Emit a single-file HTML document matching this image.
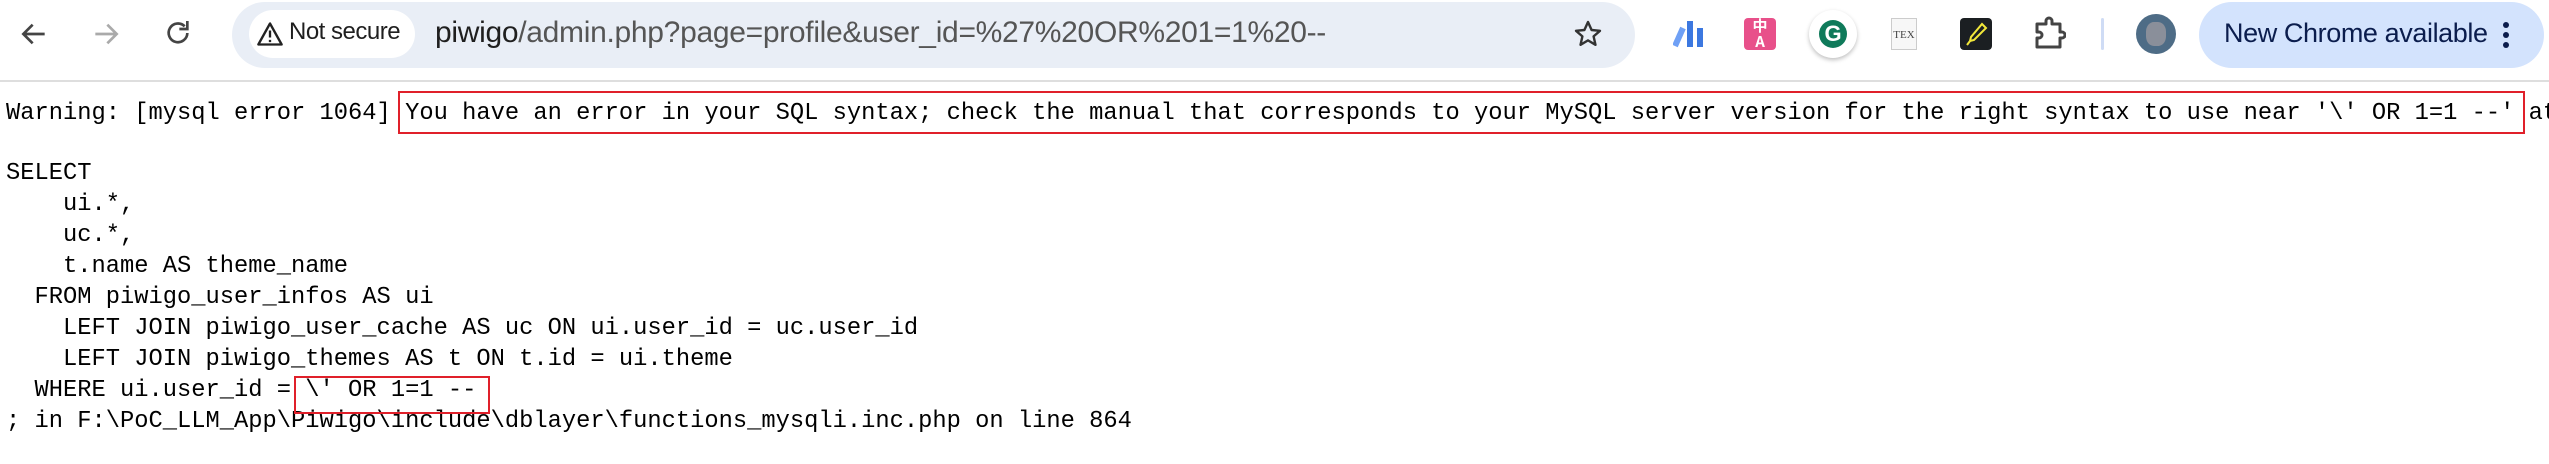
<!DOCTYPE html>
<html><head><meta charset="utf-8"><style>
*{margin:0;padding:0;box-sizing:border-box}
body{width:2549px;height:464px;background:#fff;position:relative;overflow:hidden;font-family:"Liberation Sans",sans-serif}
.a{position:absolute}
.m{position:absolute;left:6px;font-family:"Liberation Mono",monospace;font-size:23.75px;line-height:31px;white-space:pre;color:#000}
.box{position:absolute;border:2px solid #e0202a}
</style></head><body>
<!-- toolbar -->
<svg class="a" style="left:18px;top:18px" width="32" height="32" viewBox="0 0 24 24"><path d="M20 12H5M11 5l-7 7 7 7" fill="none" stroke="#444" stroke-width="2"/></svg>
<svg class="a" style="left:90px;top:18px" width="32" height="32" viewBox="0 0 24 24"><path d="M4 12h15M13 5l7 7-7 7" fill="none" stroke="#aaa" stroke-width="2"/></svg>
<svg class="a" style="left:162px;top:17px" width="32" height="32" viewBox="0 0 24 24"><path d="M19 12a7 7 0 1 1-2-5" fill="none" stroke="#444" stroke-width="2"/><path d="M19 3v6h-6" fill="none" stroke="#444" stroke-width="2"/></svg>
<div class="a" style="left:232px;top:2px;width:1403px;height:66px;border-radius:33px;background:#e9eef6"></div>
<div class="a" style="left:249px;top:10px;width:166px;height:48px;border-radius:24px;background:#fff"></div>
<svg class="a" style="left:256px;top:20px" width="28" height="28" viewBox="0 0 24 24"><path d="M12 3L2 21h20z" fill="none" stroke="#222" stroke-width="2" stroke-linejoin="round"/><path d="M12 9v6M12 17v2" stroke="#222" stroke-width="2"/></svg>
<div class="a" style="left:289px;top:18px;font-size:24px;color:#1f1f1f;letter-spacing:-0.5px">Not secure</div>
<div class="a" style="left:435px;top:16px;font-size:30px;color:#1f1f1f;letter-spacing:-0.3px">piwigo<span style="color:#555">/admin.php?page=profile&amp;user_id=%27%20OR%201=1%20--</span></div>
<svg class="a" style="left:1572px;top:18px" width="32" height="32" viewBox="0 0 24 24"><path d="M12 3l2.7 6 6.3.6-4.8 4.2 1.4 6.3L12 16.8 6.4 20.1l1.4-6.3L3 9.6 9.3 9z" fill="none" stroke="#333" stroke-width="1.8" stroke-linejoin="round"/></svg>
<svg class="a" style="left:1673px;top:20px" width="32" height="28" viewBox="0 0 32 28"><path d="M2 26L10 8" stroke="#6fa0f5" stroke-width="6"/><rect x="14" y="1" width="6" height="26" fill="#3c78e0"/><rect x="24" y="8" width="6" height="19" fill="#3c78e0"/></svg>
<div class="a" style="left:1744px;top:18px;width:32px;height:32px;border-radius:4px;background:#e8508a;color:#fff;font-size:15px;font-weight:bold;text-align:center;line-height:16px;font-family:'Noto Sans CJK SC',sans-serif">中<br>A</div>
<div class="a" style="left:1809px;top:10px;width:48px;height:48px;border-radius:50%;background:#fff;box-shadow:0 2px 4px rgba(0,0,0,.25)"></div>
<div class="a" style="left:1819px;top:20px;width:28px;height:28px;border-radius:50%;background:#0f7a5a;color:#fff;font-weight:bold;font-size:22px;text-align:center;line-height:28px">G</div>
<div class="a" style="left:1891px;top:18px;width:26px;height:32px;border:1px solid #ccc;background:#f7f7f7;font-family:'Liberation Serif',serif;font-size:11px;line-height:32px;text-align:center;color:#444">TEX</div>
<div class="a" style="left:1960px;top:18px;width:32px;height:32px;border-radius:4px;background:#1b1f22"></div>
<svg class="a" style="left:1960px;top:18px" width="32" height="32" viewBox="0 0 32 32"><path d="M22 6l4 4-12 12-4 1 1-4z" fill="none" stroke="#f2e83a" stroke-width="2"/><path d="M10 23l-3 4" stroke="#f2e83a" stroke-width="2"/></svg>
<svg class="a" style="left:2034px;top:16px" width="32" height="34" viewBox="0 0 32 34"><path d="M3 8h9V5a3 3 0 0 1 6 0v3h8v8h2a3 3 0 0 1 0 6h-2v9H3v-9h2a3 3 0 0 0 0-6H3z" fill="none" stroke="#444" stroke-width="3" stroke-linejoin="round"/></svg>
<div class="a" style="left:2101px;top:18px;width:3px;height:32px;background:#cfdcf5;border-radius:2px"></div>
<div class="a" style="left:2136px;top:14px;width:40px;height:40px;border-radius:50%;background:#4e6c86"></div>
<div class="a" style="left:2146px;top:22px;width:20px;height:24px;border-radius:40%;background:#8a8f9a"></div>
<div class="a" style="left:2199px;top:2px;width:345px;height:66px;border-radius:33px;background:#d3e3fd"></div>
<div class="a" style="left:2224px;top:18px;font-size:27px;color:#0b1d4d;letter-spacing:-0.4px">New Chrome available</div>
<div class="a" style="left:2503px;top:22px;width:6px;height:6px;border-radius:50%;background:#0b1d4d"></div>
<div class="a" style="left:2503px;top:32px;width:6px;height:6px;border-radius:50%;background:#0b1d4d"></div>
<div class="a" style="left:2503px;top:42px;width:6px;height:6px;border-radius:50%;background:#0b1d4d"></div>
<div class="a" style="left:0;top:80px;width:2549px;height:2px;background:#dedede"></div>
<!-- content -->
<div class="m" style="top:98px">Warning: [mysql error 1064] You have an error in your SQL syntax; check the manual that corresponds to your MySQL server version for the right syntax to use near '\' OR 1=1 --' at line 7</div>
<div class="m" style="top:158px">SELECT
    ui.*,
    uc.*,
    t.name AS theme_name
  FROM piwigo_user_infos AS ui
    LEFT JOIN piwigo_user_cache AS uc ON ui.user_id = uc.user_id
    LEFT JOIN piwigo_themes AS t ON t.id = ui.theme
  WHERE ui.user_id = \' OR 1=1 --
; in F:\PoC_LLM_App\Piwigo\include\dblayer\functions_mysqli.inc.php on line 864</div>
<div class="box" style="left:398px;top:91px;width:2127px;height:43px"></div>
<div class="box" style="left:294px;top:376px;width:196px;height:38px"></div>
</body></html>
